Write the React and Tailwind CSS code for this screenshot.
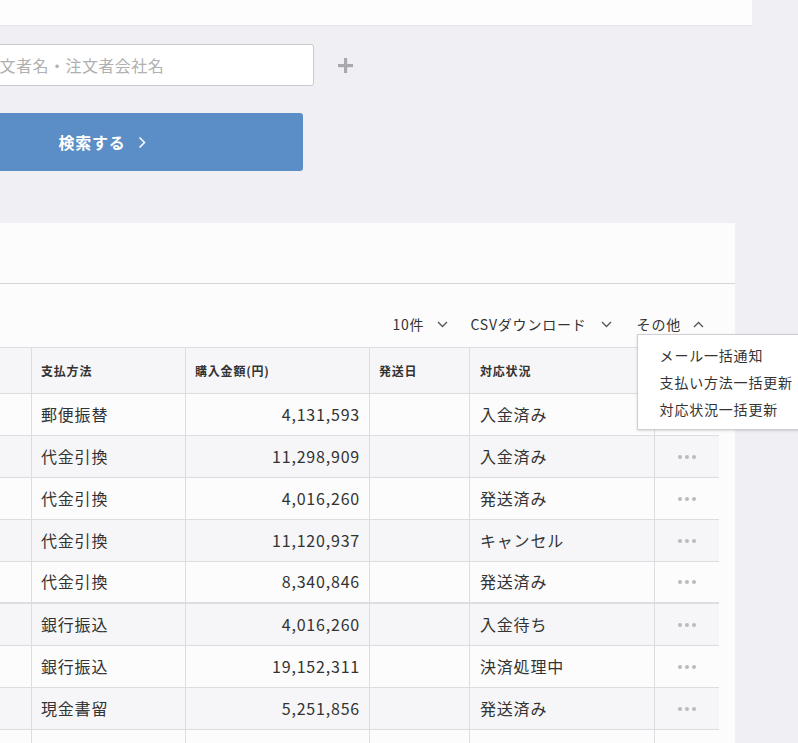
import React from 'react'

const rows = [
  { method: '郵便振替', amount: '4,131,593', status: '入金済み', bg: 'bg-[#fcfcfc]' },
  { method: '代金引換', amount: '11,298,909', status: '入金済み', bg: 'bg-[#f6f6f8]' },
  { method: '代金引換', amount: '4,016,260', status: '発送済み', bg: 'bg-[#fcfcfc]' },
  { method: '代金引換', amount: '11,120,937', status: 'キャンセル', bg: 'bg-[#f6f6f8]' },
  { method: '代金引換', amount: '8,340,846', status: '発送済み', bg: 'bg-[#fcfcfc]', thick: true },
  { method: '銀行振込', amount: '4,016,260', status: '入金待ち', bg: 'bg-[#f6f6f8]' },
  { method: '銀行振込', amount: '19,152,311', status: '決済処理中', bg: 'bg-[#fcfcfc]' },
  { method: '現金書留', amount: '5,251,856', status: '発送済み', bg: 'bg-[#f6f6f8]' },
  { method: '代金引換', amount: '556', status: '入金待ち', bg: 'bg-[#fcfcfc]' },
]

const cols = 'grid grid-cols-[32px_154px_184px_100px_185px_64px]'

const Chevron = ({ up }) => (
  <svg width="11" height="7" viewBox="0 0 11 7" fill="none" stroke="#555" strokeWidth="1.3">
    {up ? <path d="M1 6l4.5-4.5L10 6" /> : <path d="M1 1l4.5 4.5L10 1" />}
  </svg>
)

const Dots = () => (
  <div className="flex gap-[3px]">
    <span className="w-[4px] h-[4px] rounded-full bg-[#b8bbc0]"></span>
    <span className="w-[4px] h-[4px] rounded-full bg-[#b8bbc0]"></span>
    <span className="w-[4px] h-[4px] rounded-full bg-[#b8bbc0]"></span>
  </div>
)

const App = () => {
  return (
    <div
      className="min-h-screen w-[798px] h-[743px] overflow-hidden bg-[#efeff4] text-[#333] tracking-[0.05em]"
      style={{ fontFamily: '"Noto Sans CJK JP", "Noto Sans", sans-serif' }}
    >
      <div className="h-[26px] w-[752px] bg-[#fcfdfc] border-b border-[#e3e3e8]"></div>

      <div className="mt-[18px] flex items-center -ml-[30px]">
        <input
          className="w-[344px] h-[42px] rounded-[3px] border border-[#c9cacf] bg-white pl-[12px] text-[16px] tracking-[0.03em] placeholder-[#b0b0b0] outline-none"
          placeholder="注文者名・注文者会社名"
        />
        <svg className="ml-[24px]" width="15" height="15" viewBox="0 0 15 15" fill="#a9a9ad">
          <rect x="6" y="0" width="3.2" height="15" />
          <rect x="0" y="6" width="15" height="3.2" />
        </svg>
      </div>

      <button className="mt-[27px] -ml-[99px] w-[402px] h-[58px] rounded-[3px] bg-[#5b8dc6] text-white text-[16px] font-bold flex items-center justify-center gap-[12px]">
        <span>検索する</span>
        <svg width="8" height="13" viewBox="0 0 8 13" fill="none" stroke="white" strokeWidth="1.5">
          <path d="M1.5 1.5l5 5-5 5" />
        </svg>
      </button>

      <section className="mt-[52px] w-[735px] bg-[#fcfcfc]">
        <div className="h-[61px] border-b border-[#d6d6da]"></div>

        <div className="flex justify-end pr-[31px] pt-[30px] pb-[13px] text-[14px] leading-[20px]">
          <div className="flex items-center gap-[13px]">
            <span>10件</span>
            <Chevron />
          </div>
          <div className="flex items-center gap-[14px] ml-[22px]">
            <span>CSVダウンロード</span>
            <Chevron />
          </div>
          <div className="relative flex items-center gap-[12px] ml-[25px]">
            <span>その他</span>
            <Chevron up />
            <div className="absolute left-0 top-full z-10 w-[190px] border border-[#cfcfd3] bg-white pt-[7px] pb-[6px] pl-[22px] leading-[27px] shadow-sm whitespace-nowrap">
              <div>メール一括通知</div>
              <div>支払い方法一括更新</div>
              <div>対応状況一括更新</div>
            </div>
          </div>
        </div>

        <div className="w-[719px] border-t border-[#dcdde1]">
          <div className={`${cols} h-[46px] bg-[#f6f6f8] border-b border-[#dcdde1] text-[12px] font-bold items-center`}>
            <div className="h-full border-r border-[#dcdde1]"></div>
            <div className="h-full flex items-center pl-[9px] border-r border-[#dcdde1]">支払方法</div>
            <div className="h-full flex items-center pl-[9px] border-r border-[#dcdde1]">購入金額(円)</div>
            <div className="h-full flex items-center pl-[9px] border-r border-[#dcdde1]">発送日</div>
            <div className="h-full flex items-center pl-[10px] border-r border-[#dcdde1]">対応状況</div>
            <div className="h-full"></div>
          </div>
          {rows.map((row, idx) => (
            <div
              key={idx}
              className={`${cols} h-[42px] text-[16px] ${row.bg} ${row.thick ? 'border-b-2' : 'border-b'} border-[#dcdde1]`}
            >
              <div className="h-full border-r border-[#dcdde1]"></div>
              <div className="h-full flex items-center pl-[9px] pb-[2px] border-r border-[#dcdde1]">{row.method}</div>
              <div className="h-full flex items-center justify-end pr-[9px] pb-[2px] border-r border-[#dcdde1]">{row.amount}</div>
              <div className="h-full border-r border-[#dcdde1]"></div>
              <div className="h-full flex items-center pl-[10px] pb-[2px] border-r border-[#dcdde1]">{row.status}</div>
              <div className="h-full flex items-center justify-center">
                <Dots />
              </div>
            </div>
          ))}
        </div>
      </section>
    </div>
  )
}

export default App
